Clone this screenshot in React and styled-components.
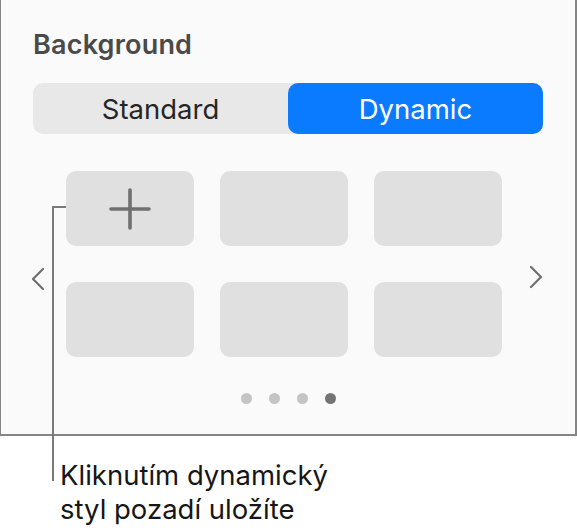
import React from "react";
import styled, { createGlobalStyle } from "styled-components";

const Global = createGlobalStyle`
  html, body { margin: 0; padding: 0; background: #ffffff; }
  body { font-family: Inter, "Noto Sans", "Liberation Sans", sans-serif; }
`;

const Page = styled.div`
  position: relative;
  width: 577px;
  height: 531px;
  overflow: hidden;
`;

const Panel = styled.section`
  box-sizing: border-box;
  width: 577px;
  height: 436px;
  background: #fafafa;
  border-left: 1px solid #858585;
  border-right: 2px solid #858585;
  border-bottom: 2px solid #858585;
  padding: 27px 32px 0 32px;
  display: flex;
  flex-direction: column;
`;

const Title = styled.h2`
  margin: 0;
  font-size: 27px;
  font-weight: 600;
  line-height: 36px;
  color: #4a4a4a;
  letter-spacing: 0.2px;
`;

const Segmented = styled.div`
  margin-top: 20px;
  display: grid;
  grid-template-columns: 1fr 1fr;
  width: 510px;
  height: 51px;
  border-radius: 10px;
  background: #e8e8e8;
`;

const Segment = styled.div`
  display: flex;
  align-items: center;
  justify-content: center;
  border-radius: 10px;
  font-size: 27.5px;
  font-weight: 400;
  color: ${(p) => (p.$active ? "#ffffff" : "#262626")};
  background: ${(p) => (p.$active ? "#0a7aff" : "transparent")};
`;

const Carousel = styled.div`
  margin-top: 37px;
  display: flex;
  align-items: center;
`;

const Arrow = styled.div`
  width: ${(p) => (p.$right ? "41px" : "35px")};
  margin-left: ${(p) => (p.$right ? "0" : "-2px")};
  display: flex;
  justify-content: ${(p) => (p.$right ? "flex-end" : "flex-start")};
  margin-top: ${(p) => (p.$right ? "26px" : "30px")};
  color: #6e6e6e;
`;

const Tiles = styled.div`
  display: grid;
  grid-template-columns: repeat(3, 128px);
  grid-auto-rows: 75px;
  column-gap: 26px;
  row-gap: 36px;
`;

const Tile = styled.div`
  background: #e0e0e0;
  border-radius: 10px;
  display: flex;
  align-items: center;
  justify-content: center;
  color: #707070;
`;

const Dots = styled.div`
  margin-top: 36px;
  display: flex;
  justify-content: center;
  gap: 17px;
`;

const Dot = styled.span`
  width: 11px;
  height: 11px;
  border-radius: 50%;
  background: ${(p) => (p.$active ? "#747474" : "#c4c4c4")};
`;

const Caption = styled.p`
  margin: 22px 0 0 60px;
  font-size: 27.5px;
  line-height: 34px;
  color: #161616;
  font-weight: 400;
`;

const Leader = styled.div`
  position: absolute;
  left: 52px;
  top: 206px;
  width: 12px;
  height: 273px;
  border-left: 2px solid #7a7a7a;
  border-top: 2px solid #7a7a7a;
`;

const Chevron = ({ dir }) => (
  <svg width="14" height="24" viewBox="0 0 14 24" fill="none">
    <path
      d={dir === "left" ? "M12 2 L2 12 L12 22" : "M2 2 L12 12 L2 22"}
      stroke="currentColor"
      strokeWidth="2.2"
      strokeLinecap="round"
      strokeLinejoin="round"
    />
  </svg>
);

const Plus = () => (
  <svg width="44" height="44" viewBox="0 0 44 44" fill="none">
    <path
      d="M22 3 V41 M3 22 H41"
      stroke="currentColor"
      strokeWidth="3.6"
      strokeLinecap="round"
    />
  </svg>
);

export default function App() {
  return (
    <Page>
      <Global />
      <Panel>
        <Title>Background</Title>
        <Segmented>
          <Segment>Standard</Segment>
          <Segment $active>Dynamic</Segment>
        </Segmented>
        <Carousel>
          <Arrow>
            <Chevron dir="left" />
          </Arrow>
          <Tiles>
            <Tile>
              <Plus />
            </Tile>
            <Tile />
            <Tile />
            <Tile />
            <Tile />
            <Tile />
          </Tiles>
          <Arrow $right>
            <Chevron dir="right" />
          </Arrow>
        </Carousel>
        <Dots>
          <Dot />
          <Dot />
          <Dot />
          <Dot $active />
        </Dots>
      </Panel>
      <Caption>
        Kliknutím dynamický
        <br />
        styl pozadí uložíte
      </Caption>
      <Leader />
    </Page>
  );
}
